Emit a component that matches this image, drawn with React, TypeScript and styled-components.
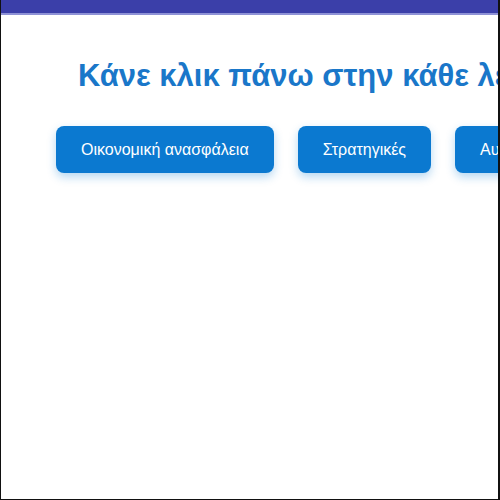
import styled, { createGlobalStyle } from "styled-components";

const GlobalStyle = createGlobalStyle`
  html, body {
    margin: 0;
    padding: 0;
    background: #fff;
  }
  * {
    box-sizing: border-box;
  }
`;

const topics = ["Οικονομική ανασφάλεια", "Στρατηγικές", "Αυτοεκτίμηση", "Σχέσεις"];

const App = () => {
  return (
    <>
      <GlobalStyle />
      <Frame>
        <TopBar />
        <Content>
          <Title>Κάνε κλικ πάνω στην κάθε λέξη για να μάθεις περισσότερα</Title>
          <Buttons>
            {topics.map((t) => (
              <TopicButton key={t}>{t}</TopicButton>
            ))}
          </Buttons>
        </Content>
      </Frame>
    </>
  );
};

const Frame = styled.div`
  width: 500px;
  height: 500px;
  border: 1px solid #111;
  border-right-width: 2px;
  border-top: none;
  overflow: hidden;
  background: #fff;
`;

const TopBar = styled.div`
  height: 15px;
  background: #3b3fa9;
  border-bottom: 2px solid #8e92d6;
`;

const Content = styled.div`
  padding: 42px 0 0 55px;
`;

const Title = styled.h1`
  margin: 0 0 0 22px;
  white-space: nowrap;
  font-family: "Liberation Sans", Arial, sans-serif;
  font-size: 31px;
  font-weight: bold;
  color: #1a77c9;
  line-height: 38px;
`;

const Buttons = styled.div`
  display: flex;
  gap: 24px;
  margin-top: 31px;
  width: max-content;
`;

const TopicButton = styled.button`
  height: 47px;
  padding: 0 25px;
  border: none;
  border-radius: 8px;
  background: #0b79d0;
  color: #fff;
  font-family: "Liberation Sans", Arial, sans-serif;
  font-size: 16px;
  white-space: nowrap;
  box-shadow: 0 4px 10px rgba(11, 121, 208, 0.3);
  cursor: pointer;
`;

export default App;
